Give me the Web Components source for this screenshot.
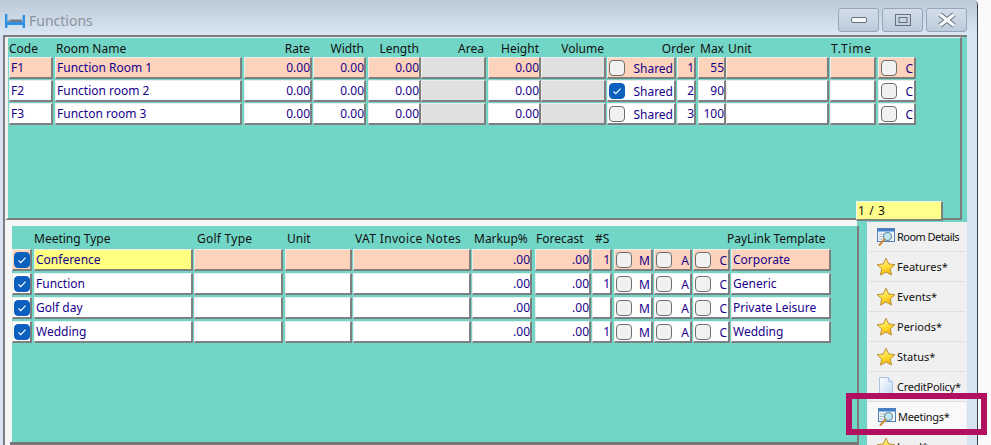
<!DOCTYPE html>
<html><head><meta charset="utf-8"><style>
html,body{margin:0;padding:0;width:991px;height:445px;overflow:hidden;background:#fafafa}
</style></head><body>
<fn-window>
  <fn-titlebar slot="title" label="Functions"></fn-titlebar>
  <fn-table slot="top" id="t1"></fn-table>
  <fn-pager slot="pager">1 / 3</fn-pager>
  <fn-table slot="bottom" id="t2"></fn-table>
  <fn-side slot="side">
    <fn-side-item icon="search" style="letter-spacing:-.55px">Room Details</fn-side-item>
    <fn-side-item icon="star">Features*</fn-side-item>
    <fn-side-item icon="star">Events*</fn-side-item>
    <fn-side-item icon="star">Periods*</fn-side-item>
    <fn-side-item icon="star">Status*</fn-side-item>
    <fn-side-item icon="doc" style="letter-spacing:-.25px">CreditPolicy*</fn-side-item>
    <fn-side-item icon="search" active style="padding-left:9px;letter-spacing:-.3px">Meetings*</fn-side-item>
    <fn-side-item icon="star">Lead*</fn-side-item>
  </fn-side>
</fn-window>
<script>
const FONT='"Noto Sans","DejaVu Sans",sans-serif';
const ICONS={
star:`<svg width="20" height="20" viewBox="0 0 20 20"><defs><linearGradient id="s" x1="0.3" y1="0" x2="0.7" y2="1"><stop offset="0" stop-color="#fff6a0"/><stop offset=".55" stop-color="#ffd92e"/><stop offset="1" stop-color="#f2a90f"/></linearGradient></defs><path d="M10 1.2l2.7 5.7 6.2.8-4.6 4.2 1.2 6.2L10 15l-5.5 3.1 1.2-6.2L1.1 7.7l6.2-.8z" fill="url(#s)" stroke="#b9923a" stroke-width="1" stroke-linejoin="round"/></svg>`,
search:`<svg width="20" height="20" viewBox="0 0 20 20"><rect x="1.5" y="1.5" width="17" height="13" fill="#f3f7fb" stroke="#4f7fb5"/><rect x="2" y="2" width="16" height="2.5" fill="#3f7fc9"/><path d="M3 7h5M3 9.500h4M3 12h5" stroke="#a9b8c8"/><circle cx="11.500" cy="9.500" r="4" fill="#bfe6ee" stroke="#6d8fa5" stroke-width="1.200"/><path d="M8.500 12.500L3.500 18" stroke="#c98a3a" stroke-width="2" stroke-linecap="round"/></svg>`,
doc:`<svg width="20" height="20" viewBox="0 0 20 20"><defs><linearGradient id="d" x1="0" y1="0" x2="1" y2="1"><stop offset="0" stop-color="#fff"/><stop offset="1" stop-color="#bcd7f3"/></linearGradient></defs><path d="M3.500 .5h9l4 4v15h-13z" fill="url(#d)" stroke="#a9c4e2"/><path d="M12.500 .5v4h4" fill="#dfeaf7" stroke="#a9c4e2"/></svg>`};

function def(name,cls){customElements.define(name,cls)}
function shell(el,html){el.attachShadow({mode:'open'}).innerHTML=html}

def('fn-window',class extends HTMLElement{constructor(){super();shell(this,`<style>
:host{display:block;position:relative;width:978px;height:445px;overflow:hidden;box-sizing:border-box;
 border-right:1px solid #3a3f46;border-radius:0 5px 0 0;background:#d6e3f1;font-family:${FONT}}
.wrap{display:flex;flex-direction:column;height:445px}
.title{flex:none;height:35px}
.body{flex:1;display:flex;flex-direction:column;margin:0 10px 0 3px;position:relative;background:#f6f6f6;border-left:2px solid #7d7d7d;min-height:0}
.upper{flex:none;height:185px;box-sizing:border-box;border-top:2px solid #7d7d7d;background:#72d6c6;position:relative}
.upper-in{position:absolute;left:0;right:5px;top:0;bottom:0;border-right:2px solid #7d7d7d;border-bottom:2px solid #7d7d7d;border-left:3px solid #f2f2f2;box-sizing:border-box;border-top:1px solid #e4efec}
.band{flex:none;height:6px;background:linear-gradient(90deg,#f6f6f6 852px,#72d6c6 852px)}
.lower{flex:1;display:flex;min-height:0}
.pane{flex:none;width:847px;margin-left:5px;box-sizing:border-box;border-bottom:3px solid #777;padding:0 0 0 2px;display:flex}
.pane-in{flex:1;background:#72d6c6}
.rule{flex:none;width:2px;background:#7d7d7d;margin-bottom:-3px}
.gut{flex:none;width:8px;background:#72d6c6}
.sideHold{flex:none;width:100px;background:#72d6c6;margin-top:-4px;position:relative}
::slotted([slot=pager]){position:absolute;left:851px;top:166px}
</style><div class="wrap"><div class="title"><slot name="title"></slot></div>
<div class="body"><div class="upper"><div class="upper-in"><slot name="top"></slot></div></div>
<div class="band"></div>
<div class="lower"><div class="pane"><div class="pane-in"><slot name="bottom"></slot></div></div><div class="rule"></div><div class="gut"></div><div class="sideHold"><slot name="side"></slot></div></div>
<slot name="pager"></slot></div></div>`)}});

def('fn-titlebar',class extends HTMLElement{constructor(){super();shell(this,`<style>
:host{display:flex;height:35px;box-sizing:border-box;align-items:flex-start;background:linear-gradient(#bccad8,#d9e6f3)}
.ic{margin:14px 0 0 5px;width:20px;height:14px;flex:none}
.t{margin:11px 0 0 4px;font-size:14px;line-height:20px;color:#8b9299;flex:1}
.btns{display:flex;gap:3px;margin:8px 10px 0 0}
.b{width:41px;height:24px;box-sizing:border-box;border:1px solid #95a6b8;border-radius:3px;background:linear-gradient(#d3deea,#bccbdb);display:flex;align-items:center;justify-content:center}
</style>
<svg class="ic" viewBox="0 0 20 14"><path d="M1.200 0v14M18.800 1v13" stroke="#2f8fe0" stroke-width="2.400"/><path d="M2 8h16v3H2z" fill="#2f8fe0"/><path d="M5 5.500h12v2.500H5z" fill="#6f7b88"/><path d="M2.500 6h3v2h-3z" fill="#8e99a5"/></svg>
<div class="t"></div>
<div class="btns">
<div class="b"><svg width="16" height="6"><rect x=".5" y=".5" width="15" height="5" rx="1.500" fill="#f4f6f8" stroke="#65707c"/></svg></div>
<div class="b"><svg width="16" height="12"><rect x=".5" y=".5" width="15" height="11" fill="none" stroke="#65707c"/><rect x="4" y="3.500" width="8" height="5" fill="none" stroke="#65707c"/></svg></div>
<div class="b"><svg width="20" height="16" viewBox="0 0 20 16"><path d="M3 2.500l14 11M17 2.500L3 13.500" stroke="#65707c" stroke-width="5"/><path d="M3 2.500l14 11M17 2.500L3 13.500" stroke="#f7f8fa" stroke-width="3.200"/></svg></div>
</div>`);this.shadowRoot.querySelector('.t').textContent=this.getAttribute('label')}});

def('fn-pager',class extends HTMLElement{constructor(){super();shell(this,`<style>
:host{display:block;width:87px;height:20px;box-sizing:border-box;background:#ffff8c;border-top:1px solid #f4f4f4;border-left:1px solid #f4f4f4;border-right:2px solid #808080;border-bottom:2px solid #808080;font-size:12px;line-height:17px;padding-left:1px;color:#111;letter-spacing:.6px}
</style><slot></slot>`)}});

def('fn-check',class extends HTMLElement{constructor(){super();shell(this,`<style>
:host{display:block;width:16px;height:16px;box-sizing:border-box;border-radius:4px;flex:none;background:#f1f1f1;border:1px solid #6f6f6f}
:host([on]){background:#0b60bd;border-color:#0b60bd}
svg{display:block}
</style><svg width="14" height="14" viewBox="0 0 14 14"></svg>`)}
connectedCallback(){if(this.hasAttribute('on'))this.shadowRoot.querySelector('svg').innerHTML='<path d="M3.500 7.500l2.300 2.200 4.700-5" fill="none" stroke="#fff" stroke-width="1.100"/>'}});

def('fn-cell',class extends HTMLElement{constructor(){super();shell(this,`<style>
:host{display:flex;flex:none;align-items:center;height:22px;box-sizing:border-box;background:#fff;color:#17008c;font-size:12px;
 border-top:1px solid #ececec;border-left:1px solid #ececec;border-right:2px solid #7f7f7f;border-bottom:2px solid #7f7f7f;padding:0 0 0 1px;white-space:nowrap;overflow:hidden}
:host([p]){background:#fdd3bb}
:host([y]){background:#ffff80}
:host([g]){background:#e0e0e0}
:host([n]){justify-content:flex-end}
:host([c]){justify-content:space-between;padding:0 1px 0 0;background:#fff}
:host([c][p]){background:#fdd3bb}
</style><slot></slot>`)}});

def('fn-table',class extends HTMLElement{
 constructor(){super();shell(this,`<style>
 :host{display:block;font-size:12px}
 .h,.r{display:flex}
 .h{color:#111;white-space:nowrap;line-height:16px}
 .h span{flex:none;display:block}
 .h span.e{text-align:right}
 </style><div id="o"></div>`)}
 setup({x0,head,headH,headTop,cols,rows,gap}){
  const o=this.shadowRoot.getElementById('o');
  const h=document.createElement('div');h.className='h';h.style.height=headH+'px';h.style.paddingTop=headTop+'px';h.style.boxSizing='border-box';
  let px=x0;
  head.forEach(([t,a,b,e,ls])=>{const s=document.createElement('span');s.textContent=t;s.style.marginLeft=(a-px)+'px';s.style.width=(b-a)+'px';if(e)s.className='e';if(ls)s.style.letterSpacing=ls+'px';h.append(s);px=b});
  o.append(h);
  rows.forEach((r,i)=>{
   const d=document.createElement('div');d.className='r';if(i)d.style.marginTop=gap+'px';
   let px=x0;
   cols.forEach(([a,b,kind,km],j)=>{
    const c=document.createElement('fn-cell');c.style.marginLeft=(a-px)+'px';c.style.width=(b-a)+'px';px=b;
    const v=r.cells[j];
    if(kind=='n')c.setAttribute('n','');
    if(kind=='g')c.setAttribute('g','');
    else if(r.peach)c.setAttribute('p','');
    if(kind=='k'){
      c.setAttribute('c','');
      const k=document.createElement('fn-check');if(v&&v.on)k.setAttribute('on','');
      k.style.marginLeft=(km||1)+'px';c.append(k);
      if(v&&v.t){const t=document.createElement('span');t.textContent=v.t;t.style.paddingTop='2px';c.append(t)}
    }else if(v!=null){c.textContent=v}
    if(r.y&&j==r.y)c.setAttribute('y','');
    d.append(c)});
   o.append(d)});
 }
});

def('fn-side',class extends HTMLElement{constructor(){super();shell(this,`<style>
:host{display:block;background:#f0f0f0;height:227px;overflow:hidden}
</style><slot></slot>`)}});

def('fn-side-item',class extends HTMLElement{constructor(){super();shell(this,`<style>
:host{display:flex;align-items:center;height:30px;box-sizing:border-box;border-bottom:1px solid #e0e0e0;margin:0 1px;padding-left:8px;font-size:11px;color:#111;white-space:nowrap}
:host([active]){background:#f9f9f9}
.i{width:20px;height:20px;flex:none;margin-right:1px}
</style><span class="i"></span><slot></slot>`);this.shadowRoot.querySelector('.i').innerHTML=ICONS[this.getAttribute('icon')]}});

const k=(t,on)=>({t,on});
document.getElementById('t1').setup({
 x0:8,headH:19,headTop:3,gap:1,
 head:[['Code',9,50],['Room Name',56,200],['Rate',250,310,1],['Width',320,364,1],['Length',370,419,1],['Area',430,484,1],['Height',490,539,1],['Volume',545,604,1],['Order',640,695,1],['Max',700,724],['Unit',728,800],['T.Time',831,876,0,.8]],
 cols:[[9,53],[55,242],[244,312,'n'],[313,366,'n'],[368,421,'n'],[421,486,'g'],[488,541,'n'],[541,606,'g'],[607,676,'k'],[677,696,'n'],[698,726,'n'],[726,829],[830,876],[878,916,'k',2]],
 rows:[
 {peach:1,cells:['F1','Function Room 1','0.00','0.00','0.00','','0.00','',k('Shared'),'1','55','','',k('C')]},
 {cells:['F2','Function room 2','0.00','0.00','0.00','','0.00','',k('Shared',1),'2','90','','',k('C')]},
 {cells:['F3','Functon room 3','0.00','0.00','0.00','','0.00','',k('Shared'),'3','100','','',k('C')]}]
});
document.getElementById('t2').setup({
 x0:12,headH:23,headTop:5,gap:2,
 head:[['Meeting Type',34,190],['Golf Type',197,280,0,.25],['Unit',287,340],['VAT Invoice Notes',355,465,0,.35],['Markup%',474,531],['Forecast',536,590],['#S',595,612],['PayLink Template',727,830]],
 cols:[[12,32,'k'],[34,193],[194,283],[285,352],[353,471],[472,532,'n'],[535,591,'n'],[592,612,'n'],[614,653,'k'],[654,692,'k'],[693,730,'k'],[731,831]],
 rows:[
 {peach:1,y:1,cells:[{on:1},'Conference','','','','.00','.00','1',k('M'),k('A'),k('C'),'Corporate']},
 {cells:[{on:1},'Function','','','','.00','.00','1',k('M'),k('A'),k('C'),'Generic']},
 {cells:[{on:1},'Golf day','','','','.00','.00','',k('M'),k('A'),k('C'),'Private Leisure']},
 {cells:[{on:1},'Wedding','','','','.00','.00','1',k('M'),k('A'),k('C'),'Wedding']}]
});
customElements.define('fn-mark',class extends HTMLElement{constructor(){super();this.attachShadow({mode:'open'}).innerHTML=`<style>:host{position:absolute;left:846px;top:393px;width:141px;height:42px;box-sizing:border-box;border:6px solid #b0105f}</style>`}});
document.body.append(document.createElement('fn-mark'));
</script>
</body></html>
